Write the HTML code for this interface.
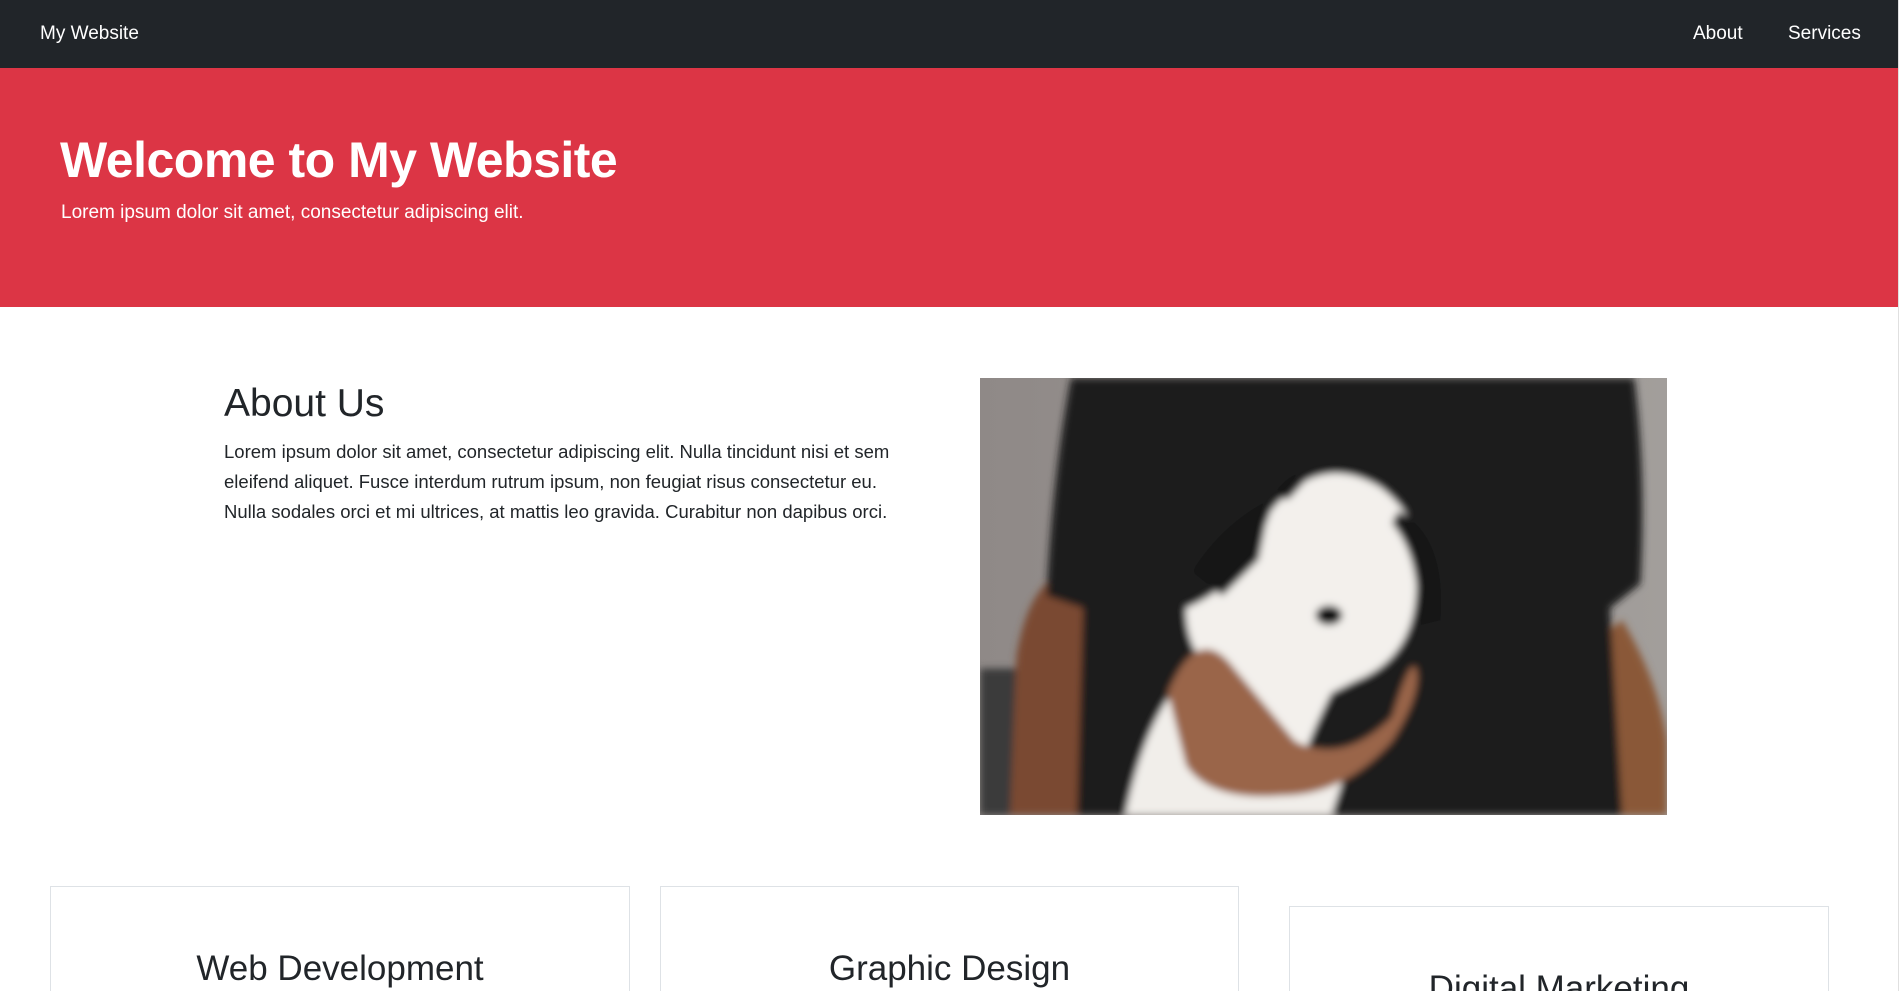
<!DOCTYPE html>
<html><head><meta charset="utf-8"><style>
*{margin:0;padding:0;box-sizing:border-box}
html,body{width:1901px;height:991px;overflow:hidden;background:#fff;font-family:"Liberation Sans",sans-serif;color:#212529}
.wrap{position:relative;width:1901px;height:991px;overflow:hidden}
.nav{position:absolute;left:0;top:0;width:1898px;height:68px;background:#212529;color:#fff;font-size:19px}
.nav span{position:absolute;top:23px}
.hero{position:absolute;left:0;top:68px;width:1898px;height:239px;background:#dc3545;color:#fff}
.hero h1{position:absolute;left:60px;top:63px;font-size:50px;font-weight:bold;letter-spacing:-0.5px}
.hero p{position:absolute;left:61px;top:134px;font-size:19px}
.sb{position:absolute;right:0;top:0;width:3px;height:991px;background:#fff;border-left:1px solid #e0e0e0}
h2{position:absolute;left:224px;top:382px;font-size:39px;font-weight:normal}
.about{position:absolute;left:224px;top:437px;width:680px;font-size:18.5px;line-height:30px}
.img{position:absolute;left:980px;top:378px;width:687px;height:437px}
.card{position:absolute;border:1px solid #dee2e6;border-bottom:none;background:#fff}
.card div{position:absolute;width:100%;text-align:center;font-size:35px}
</style></head><body><div class="wrap">
<div class="nav"><span style="left:40px">My Website</span><span style="left:1693px">About</span><span style="left:1788px">Services</span></div>
<div class="hero"><h1>Welcome to My Website</h1><p>Lorem ipsum dolor sit amet, consectetur adipiscing elit.</p></div>
<h2>About Us</h2>
<div class="about">Lorem ipsum dolor sit amet, consectetur adipiscing elit. Nulla tincidunt nisi et sem eleifend aliquet. Fusce interdum rutrum ipsum, non feugiat risus consectetur eu. Nulla sodales orci et mi ultrices, at mattis leo gravida. Curabitur non dapibus orci.</div>
<svg class="img" viewBox="0 0 567 361" preserveAspectRatio="none">
<defs><linearGradient id="bg" x1="0" x2="1"><stop offset="0" stop-color="#8f8987"/><stop offset="1" stop-color="#a29e9b"/></linearGradient>
<filter id="b"><feGaussianBlur stdDeviation="3"/></filter></defs>
<rect width="567" height="361" fill="url(#bg)"/>
<g filter="url(#b)">
<rect x="0" y="240" width="40" height="121" fill="#3a3a3a"/>
<path d="M25 361 L30 230 Q40 170 70 160 L110 170 L115 361Z" fill="#7a4a30"/>
<path d="M500 361 L505 220 L530 200 Q560 250 567 300 L567 361Z" fill="#8a5838"/>
<path d="M75 0 L540 0 Q550 80 545 170 L520 190 L530 361 L80 361 L85 190 L55 180 Q60 80 75 0Z" fill="#1b1d1e"/>
<path d="M120 361 Q140 260 190 230 L300 330 L290 361Z" fill="#f1eeea"/>
<path d="M170 190 Q220 170 240 110 Q280 60 330 90 Q370 120 360 170 Q360 230 310 250 L290 260 Q270 300 265 320 L240 320 Q220 270 200 250 Q170 230 170 190Z" fill="#f3f0ec"/>
<path d="M175 160 Q200 120 240 100 L230 150 L200 180Z" fill="#151515"/>
<path d="M345 110 Q385 130 380 200 L360 205 Q365 150 340 120Z" fill="#151515"/>
<path d="M240 100 Q255 75 275 78 L255 100Z" fill="#151515"/>
<path d="M155 260 Q180 200 210 240 L260 300 Q300 320 340 280 Q355 230 360 240 Q365 260 340 300 Q300 345 250 345 Q190 350 170 320Z" fill="#9a6548"/>
<ellipse cx="288" cy="196" rx="11" ry="8" fill="#111"/>
</g>
</svg>
<div class="card" style="left:50px;top:886px;width:580px;height:105px"><div style="top:62px">Web Development</div></div>
<div class="card" style="left:660px;top:886px;width:579px;height:105px"><div style="top:62px">Graphic Design</div></div>
<div class="card" style="left:1289px;top:906px;width:540px;height:85px"><div style="top:62px">Digital Marketing</div></div>
<div class="sb"></div>
</div></body></html>
